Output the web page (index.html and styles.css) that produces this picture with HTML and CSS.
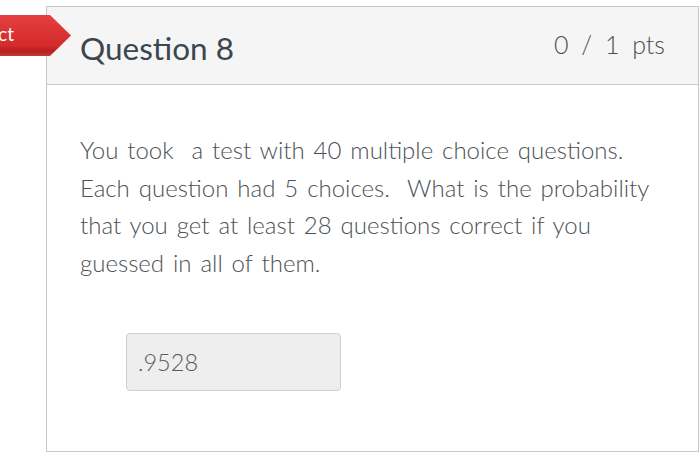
FILE: index.html
```html
<!DOCTYPE html>
<html>
<head>
<meta charset="utf-8">
<link rel="stylesheet" href="styles.css">
</head>
<body>
<div class="page">
  <div class="flag">Incorrect</div>
  <div class="card">
    <div class="card-header">
      <div class="title">Question 8</div>
      <div class="pts">0 / 1 pts</div>
    </div>
    <div class="card-body">
      <p class="question">You took&nbsp; a test with 40 multiple choice questions. Each question had 5 choices.&nbsp; What is the probability that you get at least 28 questions correct if you guessed in all of them.</p>
      <div class="answer">.9528</div>
    </div>
  </div>
</div>
</body>
</html>
```
FILE: styles.css
```css
html, body {
  margin: 0;
  padding: 0;
  background: #ffffff;
}
body {
  font-family: Lato, "Open Sans", "Liberation Sans", sans-serif;
  width: 700px;
  height: 470px;
  overflow: hidden;
}
.page {
  position: relative;
  padding: 6px 1px 0 46px;
}
.card {
  border: 1px solid #c6c6c6;
  height: 446px;
  box-sizing: border-box;
  display: flex;
  flex-direction: column;
}
.card-header {
  height: 78px;
  box-sizing: border-box;
  background: #f5f5f5;
  border-bottom: 1px solid #c6c6c6;
  display: flex;
  align-items: center;
  justify-content: space-between;
  padding: 4px 33px 0 33px;
}
.title {
  font-size: 31.5px;
  font-weight: 400;
  color: #3b464e;
}
.pts {
  font-size: 25px;
  font-weight: 300;
  color: #4e4e4e;
  word-spacing: 6px;
  margin-top: -8px;
}
.card-body {
  padding: 46px 33px 0 33px;
}
.question {
  margin: 0;
  font-size: 24px;
  font-weight: 300;
  line-height: 37.5px;
  word-spacing: 2.4px;
  color: #4c5155;
}
.answer {
  margin: 52px 0 0 46px;
  width: 215px;
  height: 58px;
  box-sizing: border-box;
  background: #eeeeee;
  border: 1px solid #cfcfcf;
  border-radius: 4px;
  display: flex;
  align-items: center;
  padding-left: 11px;
  font-size: 23.5px;
  font-weight: 300;
  color: #5a5a5a;
}
.flag {
  position: absolute;
  left: -100px;
  top: 15px;
  width: 171px;
  height: 41px;
  box-sizing: border-box;
  padding-right: 57px;
  text-align: right;
  line-height: 38px;
  font-size: 19px;
  color: #ffffff;
  background: linear-gradient(#e4403f 0%, #d42a2a 75%, #b81e1e 88%, #c23a3a 100%);
  clip-path: polygon(0 0, 150px 0, 171px 50%, 150px 100%, 0 100%);
}
```
